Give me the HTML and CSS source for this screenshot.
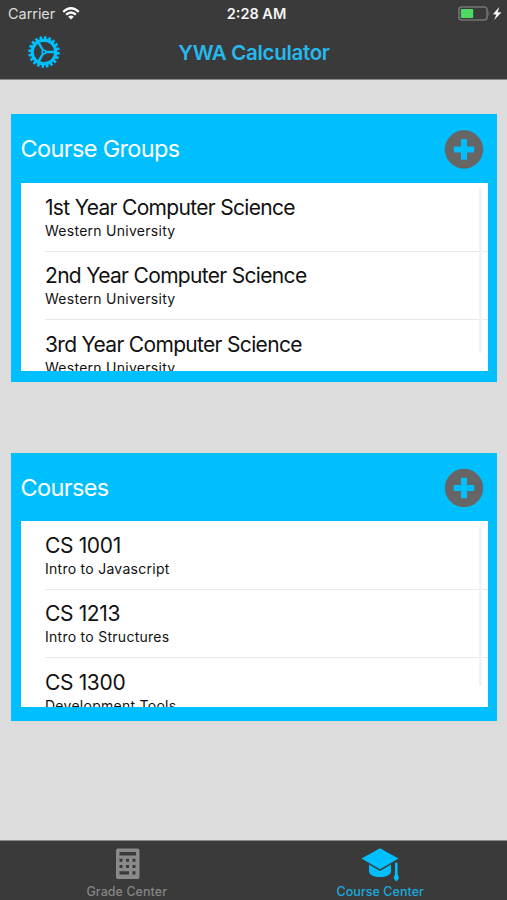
FILE: index.html
```
<!DOCTYPE html>
<html lang="en">
<head>
<meta charset="utf-8">
<title>YWA Calculator</title>
<link rel="stylesheet" href="styles.css">
</head>
<body>
<div class="app">
  <header class="top">
    <div class="status">
      <div class="carrier"><span>Carrier</span>
        <svg width="18" height="13" viewBox="0 0 18 13" fill="none" stroke="#fff" stroke-width="2.3"><path d="M1.2 4.8Q9 -2.2 16.8 4.8M4.1 7.7Q9 3.3 13.9 7.7"/><path d="M6.2 9.7Q9 7.5 11.8 9.7L9 12.6Z" fill="#fff" stroke="none"/></svg>
      </div>
      <div class="clock">2:28 AM</div>
      <svg class="battery" width="44" height="16" viewBox="0 0 44 16"><rect x=".9" y="1" width="28.2" height="13" rx="3" fill="none" stroke="#747474" stroke-width="1.6"/><rect x="2.8" y="3" width="12.4" height="9" rx=".8" fill="#4cd964"/><path d="M30.5 5q2 2.5 0 5z" fill="#747474"/><path d="M40.9 1.5 35.2 8.2h3.4l-2.1 5.3 6.6-7h-3.6z" fill="#fff" stroke="#fff" stroke-width=".3"/></svg>
    </div>
    <div class="nav">
      <svg class="gear" width="34" height="34" viewBox="-17 -17 34 34" fill="none" stroke="#00bfff"><circle r="11.8" stroke-width="3.3"/><circle r="14.3" stroke-width="3" pathLength="40" stroke-dasharray="1.15 .85"/><path d="M1.7 0H12M-.9-1.5-6-10.4M-.9 1.5-6 10.4" stroke-width="2.4"/><circle r="1.8" stroke-width="1.6"/></svg>
      <h1 class="title">YWA Calculator</h1>
    </div>
  </header>
  <main class="content">
    <section class="card">
      <div class="card-head"><h2>Course Groups</h2>
        <svg width="40" height="40" viewBox="0 0 40 40"><circle cx="20" cy="19.5" r="19.2" fill="#666"/><path d="M20 9.3v20.4M9.8 19.5h20.4" stroke="#00bfff" stroke-width="6"/></svg>
      </div>
      <div class="list">
        <div class="row"><div class="name year">1st Year Computer Science</div><div class="sub">Western University</div></div>
        <div class="row"><div class="name year">2nd Year Computer Science</div><div class="sub">Western University</div></div>
        <div class="row"><div class="name year">3rd Year Computer Science</div><div class="sub">Western University</div></div>
        <div class="scrollbar"></div>
      </div>
    </section>
    <section class="card courses">
      <div class="card-head"><h2>Courses</h2>
        <svg width="40" height="40" viewBox="0 0 40 40"><circle cx="20" cy="20" r="19.2" fill="#666"/><path d="M20 9.8v20.4M9.8 20h20.4" stroke="#00bfff" stroke-width="6"/></svg>
      </div>
      <div class="list">
        <div class="row"><div class="name">CS 1001</div><div class="sub">Intro to Javascript</div></div>
        <div class="row"><div class="name">CS 1213</div><div class="sub">Intro to Structures</div></div>
        <div class="row"><div class="name">CS 1300</div><div class="sub">Development Tools</div></div>
        <div class="scrollbar"></div>
      </div>
    </section>
  </main>
  <nav class="tabs">
    <div class="tab">
      <svg width="40" height="36" viewBox="0 0 40 36"><rect x="9" y="2.5" width="23.5" height="30.5" rx="2" fill="#8a8a8a"/><path fill="#3a3a3a" d="M12.5 6h16.5v3.6H12.5zM12.5 12.8h3v3h-3zM19 12.8h3v3h-3zM25.5 12.8h3v3h-3zM12.5 19h3v3h-3zM19 19h3v3h-3zM25.5 19h3v3h-3zM12.5 25.3h9.5v3.2H12.5zM25.5 25.3h3v3.2h-3z"/></svg>
      <span>Grade Center</span>
    </div>
    <div class="tab active">
      <svg width="40" height="36" viewBox="0 0 40 36" fill="#00bfff"><path d="M20 2.2 38.5 12.5 20 23.2 1.5 12.5z"/><path d="M9 18.5l11 6.4 11-6.4v6.5c0 8-22 8-22 0z"/><path d="M35 16.8h2.6v11.4l1.4 4-2.6 3.3-2.8-3.3 1.4-4z"/></svg>
      <span>Course Center</span>
    </div>
  </nav>
</div>
</body>
</html>
```
FILE: styles.css
```
* { box-sizing: border-box; }
body { margin: 0; font-family: Inter, "Liberation Sans", sans-serif; }
svg { display: block; flex: none; }
h1, h2 { margin: 0; font-weight: 400; }
.app { width: 507px; height: 900px; display: flex; flex-direction: column; background: #dcdcdc; overflow: hidden; }
.top { height: 80px; flex: none; background: #3a3a3a; border-bottom: 1px solid #888; }
.status { height: 27px; display: grid; grid-template-columns: 1fr 120px 1fr; align-items: center; color: #f5f5f5; padding: 0 5px 0 8px; }
.carrier { display: flex; align-items: center; gap: 7px; font-size: 14.5px; color: #ddd; letter-spacing: -.05px; }
.clock { text-align: center; font-size: 14.5px; font-weight: 600; letter-spacing: 0; padding-left: 3px; }
.battery { justify-self: end; }
.nav { height: 50px; display: grid; grid-template-columns: 60px 1fr 60px; align-items: center; }
.gear { margin-left: 27px; }
.title { text-align: center; color: #25b9ee; font-size: 20.5px; font-weight: 600; letter-spacing: -.32px; padding-left: 1px; }
.content { flex: 1; padding: 34px 10px 0 11px; min-height: 0; }
.card { height: 268px; background: #00bfff; padding: 0 9.5px 11px; display: flex; flex-direction: column; }
.card + .card { margin-top: 71px; }
.card-head { height: 69px; flex: none; display: flex; align-items: center; justify-content: space-between; padding-right: 3.5px; padding-top: 2px; color: #fff; }
.card-head h2 { font-size: 23.5px; letter-spacing: -.65px; margin-top: -2px; }
.list { position: relative; height: 188px; background: #fff; overflow: hidden; padding-left: 24.5px; }
.courses .card-head { height: 68px; }
.courses .list { height: 186px; }
.row { height: 68.4px; border-bottom: 1px solid #e9e9e9; padding-top: 10.6px; color: #111; white-space: nowrap; }
.row:first-child { height: 68.8px; }
.name { font-size: 21px; line-height: 27px; letter-spacing: -.35px; }
.year { letter-spacing: -.68px; }
.sub { font-size: 14px; line-height: 19px; letter-spacing: .27px; }
.scrollbar { position: absolute; right: 6px; top: 5px; width: 3px; height: 165px; border-radius: 2px; background: #f3f3f3; }
.courses .scrollbar { height: 160px; }
.tabs { height: 60px; flex: none; display: grid; grid-template-columns: 1fr 1fr; background: #3a3a3a; border-top: 1px solid #888; color: #858585; }
.tab { display: flex; flex-direction: column; align-items: center; padding-top: 5px; font-size: 12.5px; font-weight: 500; line-height: 18px; letter-spacing: .05px; }
.tab span { margin-top: 1px; }
.active { color: #1baade; }
```
